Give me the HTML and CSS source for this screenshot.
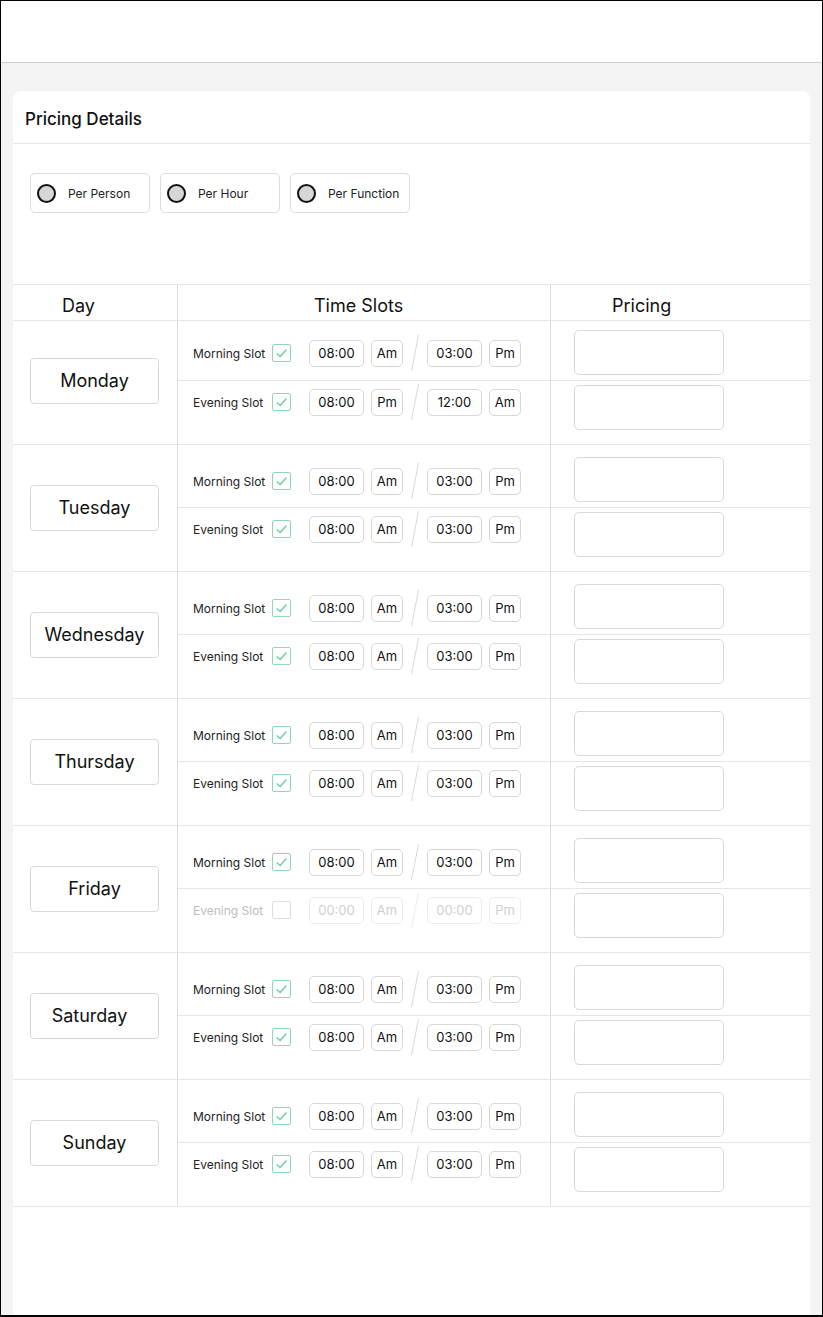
FILE: index.html
```html
<!DOCTYPE html>
<html lang="en">
<head>
<meta charset="utf-8">
<title>Pricing Details</title>
<link rel="stylesheet" href="styles.css">
</head>
<body>
<div class="frame">
  <div class="topbar"></div>
  <div class="main">
    <section class="card">
      <div class="card-head">Pricing Details</div>
      <div class="radios">
        <label class="radio"><span class="dot"></span><span>Per Person</span></label>
        <label class="radio"><span class="dot"></span><span>Per Hour</span></label>
        <label class="radio"><span class="dot"></span><span>Per Function</span></label>
      </div>
      <div class="table">
        <div class="thead">
          <div class="th th-day">Day</div>
          <div class="th th-slots">Time Slots</div>
          <div class="th th-price">Pricing</div>
        </div>

        <div class="day-block first">
          <div class="day-cell"><div class="day-box">Monday</div></div>
          <div class="subs">
            <div class="sub sub1">
              <div class="slot-cell">
                <span class="slot-label">Morning Slot</span>
                <span class="check on"><svg viewBox="0 0 18 18"><polyline points="3.5,9.5 7.5,13 14.5,5"/></svg></span>
                <span class="tbox">08:00</span><span class="abox">Am</span>
                <svg class="slash" viewBox="0 0 8 36"><line x1="7.5" y1="0" x2="0.5" y2="36"/></svg>
                <span class="tbox">03:00</span><span class="abox">Pm</span>
              </div>
              <div class="price-cell"><div class="price-box"></div></div>
            </div>
            <div class="sub sub2">
              <div class="slot-cell">
                <span class="slot-label">Evening Slot</span>
                <span class="check on"><svg viewBox="0 0 18 18"><polyline points="3.5,9.5 7.5,13 14.5,5"/></svg></span>
                <span class="tbox">08:00</span><span class="abox">Pm</span>
                <svg class="slash" viewBox="0 0 8 36"><line x1="7.5" y1="0" x2="0.5" y2="36"/></svg>
                <span class="tbox">12:00</span><span class="abox">Am</span>
              </div>
              <div class="price-cell"><div class="price-box"></div></div>
            </div>
          </div>
        </div>

        <div class="day-block">
          <div class="day-cell"><div class="day-box">Tuesday</div></div>
          <div class="subs">
            <div class="sub sub1">
              <div class="slot-cell">
                <span class="slot-label">Morning Slot</span>
                <span class="check on"><svg viewBox="0 0 18 18"><polyline points="3.5,9.5 7.5,13 14.5,5"/></svg></span>
                <span class="tbox">08:00</span><span class="abox">Am</span>
                <svg class="slash" viewBox="0 0 8 36"><line x1="7.5" y1="0" x2="0.5" y2="36"/></svg>
                <span class="tbox">03:00</span><span class="abox">Pm</span>
              </div>
              <div class="price-cell"><div class="price-box"></div></div>
            </div>
            <div class="sub sub2">
              <div class="slot-cell">
                <span class="slot-label">Evening Slot</span>
                <span class="check on"><svg viewBox="0 0 18 18"><polyline points="3.5,9.5 7.5,13 14.5,5"/></svg></span>
                <span class="tbox">08:00</span><span class="abox">Am</span>
                <svg class="slash" viewBox="0 0 8 36"><line x1="7.5" y1="0" x2="0.5" y2="36"/></svg>
                <span class="tbox">03:00</span><span class="abox">Pm</span>
              </div>
              <div class="price-cell"><div class="price-box"></div></div>
            </div>
          </div>
        </div>

        <div class="day-block">
          <div class="day-cell"><div class="day-box">Wednesday</div></div>
          <div class="subs">
            <div class="sub sub1">
              <div class="slot-cell">
                <span class="slot-label">Morning Slot</span>
                <span class="check on"><svg viewBox="0 0 18 18"><polyline points="3.5,9.5 7.5,13 14.5,5"/></svg></span>
                <span class="tbox">08:00</span><span class="abox">Am</span>
                <svg class="slash" viewBox="0 0 8 36"><line x1="7.5" y1="0" x2="0.5" y2="36"/></svg>
                <span class="tbox">03:00</span><span class="abox">Pm</span>
              </div>
              <div class="price-cell"><div class="price-box"></div></div>
            </div>
            <div class="sub sub2">
              <div class="slot-cell">
                <span class="slot-label">Evening Slot</span>
                <span class="check on"><svg viewBox="0 0 18 18"><polyline points="3.5,9.5 7.5,13 14.5,5"/></svg></span>
                <span class="tbox">08:00</span><span class="abox">Am</span>
                <svg class="slash" viewBox="0 0 8 36"><line x1="7.5" y1="0" x2="0.5" y2="36"/></svg>
                <span class="tbox">03:00</span><span class="abox">Pm</span>
              </div>
              <div class="price-cell"><div class="price-box"></div></div>
            </div>
          </div>
        </div>

        <div class="day-block">
          <div class="day-cell"><div class="day-box">Thursday</div></div>
          <div class="subs">
            <div class="sub sub1">
              <div class="slot-cell">
                <span class="slot-label">Morning Slot</span>
                <span class="check on"><svg viewBox="0 0 18 18"><polyline points="3.5,9.5 7.5,13 14.5,5"/></svg></span>
                <span class="tbox">08:00</span><span class="abox">Am</span>
                <svg class="slash" viewBox="0 0 8 36"><line x1="7.5" y1="0" x2="0.5" y2="36"/></svg>
                <span class="tbox">03:00</span><span class="abox">Pm</span>
              </div>
              <div class="price-cell"><div class="price-box"></div></div>
            </div>
            <div class="sub sub2">
              <div class="slot-cell">
                <span class="slot-label">Evening Slot</span>
                <span class="check on"><svg viewBox="0 0 18 18"><polyline points="3.5,9.5 7.5,13 14.5,5"/></svg></span>
                <span class="tbox">08:00</span><span class="abox">Am</span>
                <svg class="slash" viewBox="0 0 8 36"><line x1="7.5" y1="0" x2="0.5" y2="36"/></svg>
                <span class="tbox">03:00</span><span class="abox">Pm</span>
              </div>
              <div class="price-cell"><div class="price-box"></div></div>
            </div>
          </div>
        </div>

        <div class="day-block">
          <div class="day-cell"><div class="day-box">Friday</div></div>
          <div class="subs">
            <div class="sub sub1">
              <div class="slot-cell">
                <span class="slot-label">Morning Slot</span>
                <span class="check on"><svg viewBox="0 0 18 18"><polyline points="3.5,9.5 7.5,13 14.5,5"/></svg></span>
                <span class="tbox">08:00</span><span class="abox">Am</span>
                <svg class="slash" viewBox="0 0 8 36"><line x1="7.5" y1="0" x2="0.5" y2="36"/></svg>
                <span class="tbox">03:00</span><span class="abox">Pm</span>
              </div>
              <div class="price-cell"><div class="price-box"></div></div>
            </div>
            <div class="sub sub2">
              <div class="slot-cell disabled">
                <span class="slot-label">Evening Slot</span>
                <span class="check"></span>
                <span class="tbox">00:00</span><span class="abox">Am</span>
                <svg class="slash" viewBox="0 0 8 36"><line x1="7.5" y1="0" x2="0.5" y2="36"/></svg>
                <span class="tbox">00:00</span><span class="abox">Pm</span>
              </div>
              <div class="price-cell"><div class="price-box"></div></div>
            </div>
          </div>
        </div>

        <div class="day-block">
          <div class="day-cell"><div class="day-box sat">Saturday</div></div>
          <div class="subs">
            <div class="sub sub1">
              <div class="slot-cell">
                <span class="slot-label">Morning Slot</span>
                <span class="check on"><svg viewBox="0 0 18 18"><polyline points="3.5,9.5 7.5,13 14.5,5"/></svg></span>
                <span class="tbox">08:00</span><span class="abox">Am</span>
                <svg class="slash" viewBox="0 0 8 36"><line x1="7.5" y1="0" x2="0.5" y2="36"/></svg>
                <span class="tbox">03:00</span><span class="abox">Pm</span>
              </div>
              <div class="price-cell"><div class="price-box"></div></div>
            </div>
            <div class="sub sub2">
              <div class="slot-cell">
                <span class="slot-label">Evening Slot</span>
                <span class="check on"><svg viewBox="0 0 18 18"><polyline points="3.5,9.5 7.5,13 14.5,5"/></svg></span>
                <span class="tbox">08:00</span><span class="abox">Am</span>
                <svg class="slash" viewBox="0 0 8 36"><line x1="7.5" y1="0" x2="0.5" y2="36"/></svg>
                <span class="tbox">03:00</span><span class="abox">Pm</span>
              </div>
              <div class="price-cell"><div class="price-box"></div></div>
            </div>
          </div>
        </div>

        <div class="day-block">
          <div class="day-cell"><div class="day-box">Sunday</div></div>
          <div class="subs">
            <div class="sub sub1">
              <div class="slot-cell">
                <span class="slot-label">Morning Slot</span>
                <span class="check on"><svg viewBox="0 0 18 18"><polyline points="3.5,9.5 7.5,13 14.5,5"/></svg></span>
                <span class="tbox">08:00</span><span class="abox">Am</span>
                <svg class="slash" viewBox="0 0 8 36"><line x1="7.5" y1="0" x2="0.5" y2="36"/></svg>
                <span class="tbox">03:00</span><span class="abox">Pm</span>
              </div>
              <div class="price-cell"><div class="price-box"></div></div>
            </div>
            <div class="sub sub2">
              <div class="slot-cell">
                <span class="slot-label">Evening Slot</span>
                <span class="check on"><svg viewBox="0 0 18 18"><polyline points="3.5,9.5 7.5,13 14.5,5"/></svg></span>
                <span class="tbox">08:00</span><span class="abox">Am</span>
                <svg class="slash" viewBox="0 0 8 36"><line x1="7.5" y1="0" x2="0.5" y2="36"/></svg>
                <span class="tbox">03:00</span><span class="abox">Pm</span>
              </div>
              <div class="price-cell"><div class="price-box"></div></div>
            </div>
          </div>
        </div>
      </div>
    </section>
  </div>
</div>
</body>
</html>
```

FILE: styles.css
```css
* { box-sizing: border-box; }
html, body { margin: 0; padding: 0; }
body {
  font-family: Inter, "Noto Sans", "Liberation Sans", sans-serif;
  color: #1f1f1f;
}
.frame {
  width: 823px;
  height: 1317px;
  border: 1px solid #000;
  border-bottom-width: 2px;
  background: #f4f4f4;
  display: flex;
  flex-direction: column;
  overflow: hidden;
}
.topbar {
  height: 62px;
  flex: none;
  background: #fff;
  border-bottom: 1px solid #cfcfcf;
}
.main {
  flex: 1;
  display: flex;
  flex-direction: column;
  padding: 28px 12px 0 12px;
}
.card {
  flex: 1;
  width: 797px;
  background: #fff;
  border-radius: 8px 8px 0 0;
}
.card-head {
  height: 53px;
  padding: 18px 12px 0;
  font-size: 17px;
  font-weight: 500;
  color: #111;
  border-bottom: 1px solid #e6e6e6;
}
.radios {
  height: 140px;
  padding: 29px 17px 0;
  display: flex;
  gap: 10px;
  align-items: flex-start;
}
.radio {
  width: 120px;
  height: 40px;
  border: 1px solid #dcdcdc;
  border-radius: 5px;
  display: flex;
  align-items: center;
  padding-left: 6px;
  gap: 12px;
  font-size: 12px;
  color: #222;
}
.dot {
  width: 19px;
  height: 19px;
  border-radius: 50%;
  border: 2px solid #111;
  background: #d6d6d6;
  flex: none;
}
.table {
  border-top: 1px solid #e6e6e6;
}
.thead {
  display: flex;
  height: 36px;
  border-bottom: 1px solid #e6e6e6;
}
.th {
  font-size: 18px;
  padding-top: 10px;
  color: #111;
}
.th-day {
  width: 165px;
  padding-left: 49px;
  border-right: 1px solid #dcdcdc;
}
.th-slots {
  width: 373px;
  padding-left: 136px;
  border-right: 1px solid #dcdcdc;
}
.th-price {
  flex: 1;
  padding-left: 61px;
}
.day-block {
  display: flex;
  border-bottom: 1px solid #e6e6e6;
}
.day-cell {
  width: 165px;
  flex: none;
  border-right: 1px solid #dcdcdc;
  display: flex;
  align-items: center;
  padding-left: 17px;
  padding-bottom: 1px;
}
.first .day-cell { padding-bottom: 4px; }
.day-box {
  width: 129px;
  height: 46px;
  border: 1px solid #d9d9d9;
  border-radius: 4px;
  display: flex;
  align-items: center;
  justify-content: center;
  font-size: 18px;
  color: #111;
}
.day-box.sat { padding-right: 10px; }
.subs {
  flex: 1;
  display: flex;
  flex-direction: column;
}
.sub {
  display: flex;
  height: 63px;
}
.sub1 { border-bottom: 1px solid #e6e6e6; }
.slot-cell {
  width: 373px;
  flex: none;
  border-right: 1px solid #dcdcdc;
  display: flex;
  align-items: center;
  align-self: stretch;
  padding-left: 15px;
  font-size: 12px;
}
.sub1 .slot-cell { padding-top: 10px; }
.sub2 .slot-cell { padding-bottom: 21px; }
.first .sub1 { height: 60px; }
.first .sub1 .slot-cell { padding-top: 5px; }
.first .sub1 .price-cell { padding-top: 9px; }
.slot-label {
  width: 79px;
  flex: none;
  color: #222;
}
.check {
  width: 19px;
  height: 18px;
  border: 1px solid #8dd8b5;
  border-radius: 2px;
  margin-right: 18px;
  display: flex;
}
.check svg {
  width: 17px;
  height: 16px;
  fill: none;
  stroke: #6fcf9f;
  stroke-width: 1.6;
}
.tbox, .abox {
  height: 27px;
  border: 1px solid #d6d6d6;
  border-radius: 5px;
  display: flex;
  align-items: center;
  justify-content: center;
  font-size: 13px;
  color: #111;
  flex: none;
}
.tbox { width: 55px; }
.abox { width: 32px; margin-left: 7px; }
.slash {
  width: 8px;
  height: 36px;
  margin: 0 8px;
  flex: none;
}
.slash line { stroke: #d9d9d9; stroke-width: 1; }
.disabled .slot-label { color: #bdbdbd; }
.disabled .check { border-color: #dedede; }
.disabled .tbox, .disabled .abox { color: #cfcfcf; border-color: #ececec; }
.disabled .slash line { stroke: #ebebeb; }
.price-cell {
  flex: 1;
  padding-left: 23px;
}
.sub1 .price-cell { padding-top: 12px; }
.sub2 .price-cell { padding-top: 4px; }
.price-box {
  width: 150px;
  height: 45px;
  border: 1px solid #d9d9d9;
  border-radius: 5px;
}
```
